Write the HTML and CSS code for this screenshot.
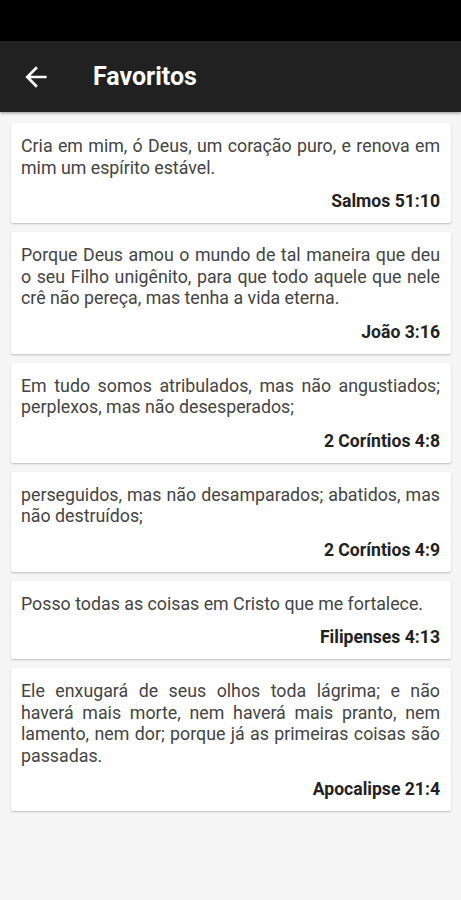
FILE: index.html
```html
<!DOCTYPE html>
<html lang="pt">
<head>
  <meta charset="UTF-8" />
  <meta name="viewport" content="width=device-width, initial-scale=1.0"/>
  <title>Favoritos</title>
  <link rel="stylesheet" href="styles.css">
</head>
<body>
  <div class="status-bar"></div>
  <header class="app-bar">
    <button class="back-btn" aria-label="Voltar">
      <svg viewBox="0 0 24 24" width="32" height="32">
        <path d="M20 11H7.83l5.59-5.59L12 4l-8 8 8 8 1.41-1.41L7.83 13H20v-2z" fill="#fff"/>
      </svg>
    </button>
    <h1>Favoritos</h1>
  </header>

  <main class="list">
    <div class="card">
      <p class="verse">Cria em mim, ó Deus, um coração puro, e renova em mim um espírito estável.</p>
      <div class="ref">Salmos 51:10</div>
    </div>
    <div class="card">
      <p class="verse">Porque Deus amou o mundo de tal maneira que deu o seu Filho unigênito, para que todo aquele que nele crê não pereça, mas tenha a vida eterna.</p>
      <div class="ref">João 3:16</div>
    </div>
    <div class="card">
      <p class="verse">Em tudo somos atribulados, mas não angustiados; perplexos, mas não desesperados;</p>
      <div class="ref">2 Coríntios 4:8</div>
    </div>
    <div class="card">
      <p class="verse">perseguidos, mas não desamparados; abatidos, mas não destruídos;</p>
      <div class="ref">2 Coríntios 4:9</div>
    </div>
    <div class="card">
      <p class="verse">Posso todas as coisas em Cristo que me fortalece.</p>
      <div class="ref">Filipenses 4:13</div>
    </div>
    <div class="card">
      <p class="verse">Ele enxugará de seus olhos toda lágrima; e não haverá mais morte, nem haverá mais pranto, nem lamento, nem dor; porque já as primeiras coisas são passadas.</p>
      <div class="ref">Apocalipse 21:4</div>
    </div>
  </main>
</body>
</html>
```

FILE: styles.css
```css
body {
  margin: 0;
  font-family: Roboto, "Noto Sans", sans-serif;
  background: #f5f5f5;
  min-height: 900px;
}
.status-bar {
  height: 41px;
  background: #000;
}
.app-bar {
  height: 71px;
  background: #212121;
  display: flex;
  align-items: center;
  box-shadow: 0 1px 3px rgba(0,0,0,0.4);
}
.back-btn {
  background: none;
  border: none;
  padding: 0;
  margin-left: 20px;
  width: 32px;
  height: 32px;
  display: flex;
}
.app-bar h1 {
  margin: 0 0 0 41px;
  color: #fff;
  font-size: 25px;
  font-weight: bold;
}
.list {
  padding: 11px 10px 10px 11px;
  display: flex;
  flex-direction: column;
  gap: 9px;
}
.card {
  background: #fff;
  border-radius: 2px;
  box-shadow: 0 1px 2px rgba(0,0,0,0.22);
  padding: 12px 11px 12px 10px;
}
.verse {
  margin: 0;
  font-size: 17.8px;
  line-height: 21.5px;
  color: #444;
  text-align: justify;
}
.ref {
  margin-top: 13px;
  text-align: right;
  font-size: 17.6px;
  line-height: 20px;
  font-weight: bold;
  color: #222;
}
```
